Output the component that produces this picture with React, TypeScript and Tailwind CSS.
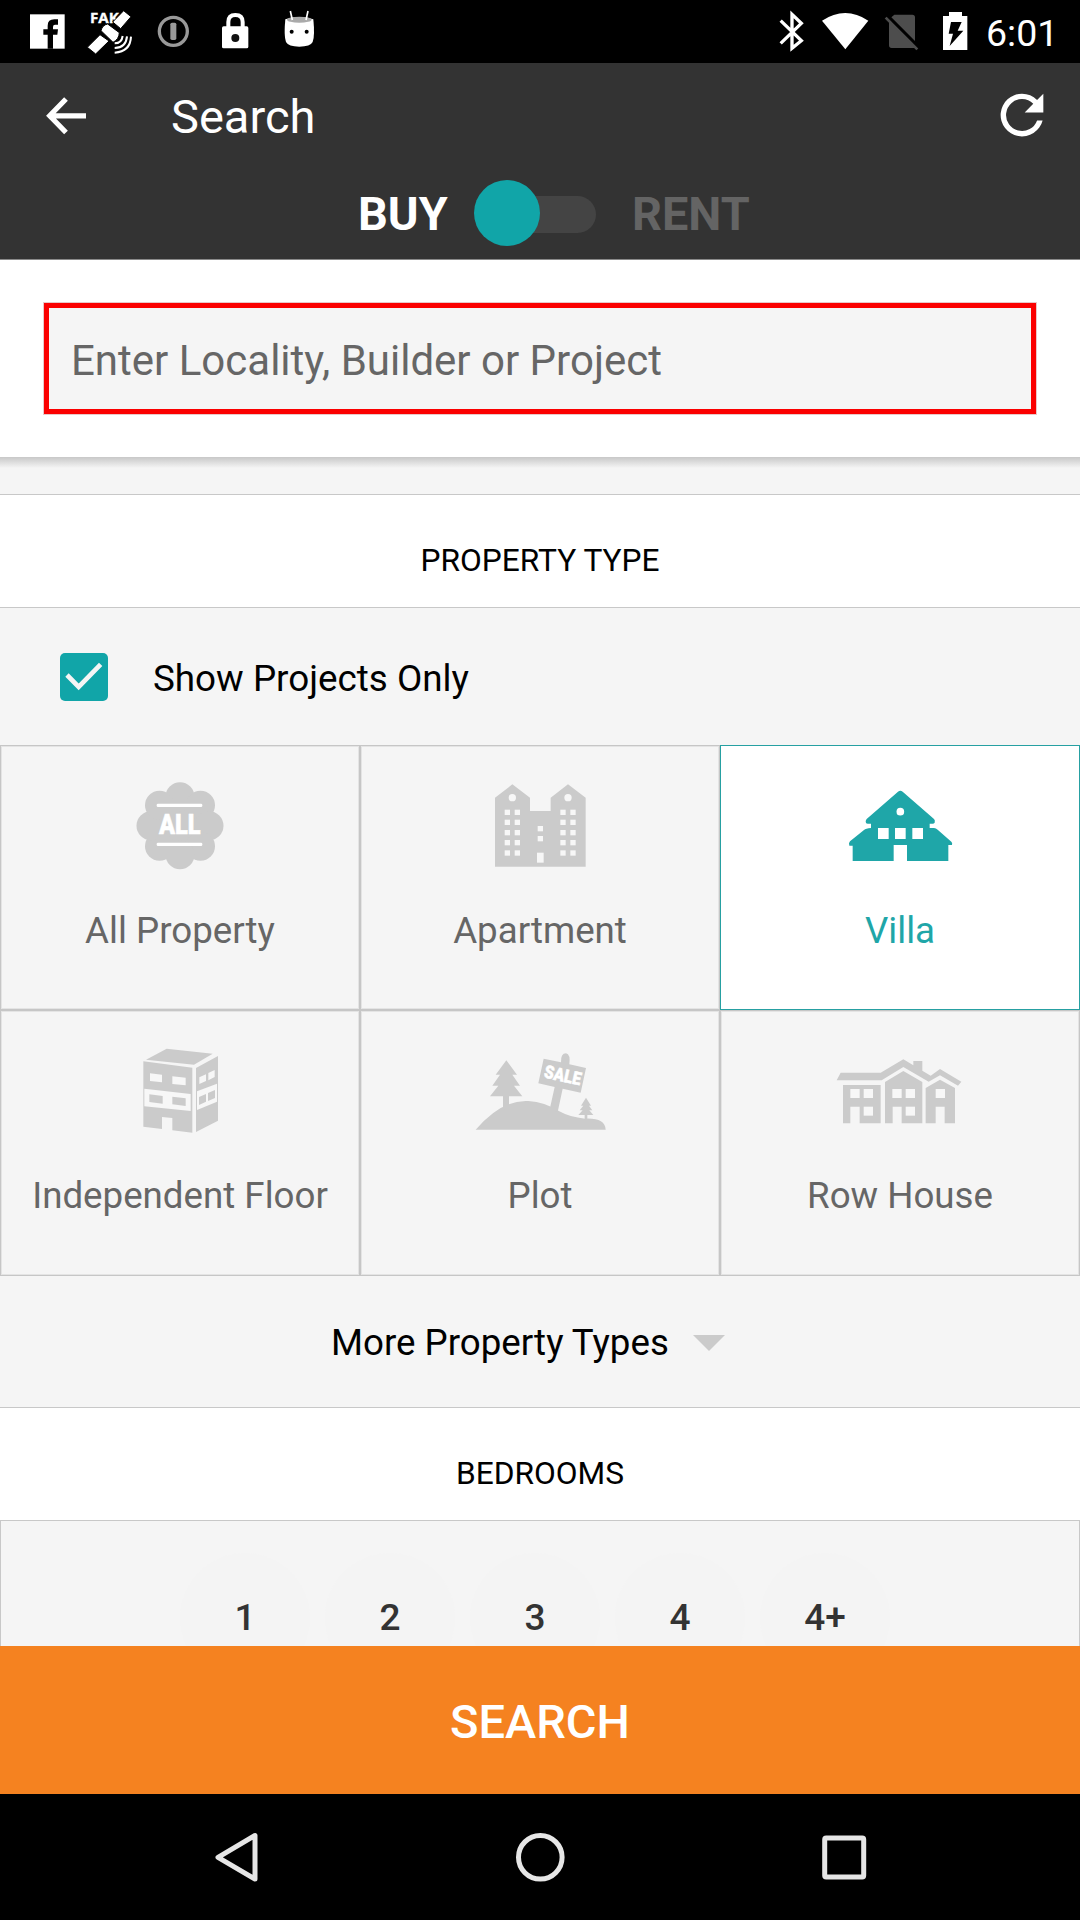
import type { ReactNode } from "react";

const GREY = "#cbcbcb";
const CUT = "#f7f7f7";

function StatusBar() {
  return (
    <div className="flex h-[63px] shrink-0 bg-black">
      <svg className="ml-[20px] h-[63px] w-[320px] shrink-0" viewBox="60 0 960 189">
        <rect x="90" y="43" width="104" height="103" fill="#fff" />
        <path d="M143 146V104H130V88H143V77Q143 58 163 58H174V74H165Q159 74 159 81V88H174L172 104H159V146Z" fill="#000" />
        <text x="270" y="69" fontSize="42" fontWeight="700" fill="#fff" stroke="#fff" strokeWidth="1" textLength="86" lengthAdjust="spacingAndGlyphs" fontFamily="Open Sans, sans-serif">FAK</text>
        <g stroke="#000" strokeWidth="3" fill="#fff">
          <path d="M338 66L371 32L393 50L362 86Z" />
          <path d="M262 142L300 104L327 123L287 162Z" />
          <path d="M303 92Q307 75 323 72L358 98Q357 118 339 127Z" />
        </g>
        <g fill="none" stroke="#fff" strokeWidth="6">
          <path d="M344 130Q365 130 368 108" />
          <path d="M344 144Q378 143 381 109" />
          <path d="M344 158Q391 155 393 110" />
        </g>
        <circle cx="520" cy="94" r="42" fill="none" stroke="#999" strokeWidth="10" />
        <rect x="511" y="68" width="18" height="52" rx="5" fill="#999" />
        <rect x="666" y="79" width="79" height="66" rx="5" fill="#fff" />
        <path d="M685 83V66Q685 45 706 45Q728 45 728 66V83" fill="none" stroke="#fff" strokeWidth="12" />
        <circle cx="706" cy="114" r="12" fill="#111" />
        <path d="M856 58Q898 44 940 58Q945 108 938 126Q931 140 898 140Q865 140 858 126Q851 108 856 58Z" fill="#fff" />
        <ellipse cx="898" cy="59" rx="37" ry="9" fill="#aaa" />
        <path d="M877 60L871 33M918 60L924 33" stroke="#fff" strokeWidth="5" />
        <circle cx="875" cy="95" r="6" fill="#000" />
        <circle cx="920" cy="95" r="6" fill="#000" />
      </svg>
      <svg className="ml-auto h-[63px] w-[208px] shrink-0" viewBox="30 0 624 189">
        <path d="M62 62L124 122L96 145V43L124 70L62 130" fill="none" stroke="#fff" strokeWidth="10" />
        <path d="M186 62Q256 16 325 62L256 148Z" fill="#fff" />
        <path d="M403 44H457Q465 44 465 52V123L394 52ZM387 66L465 144H395Q387 144 387 136Z" fill="#4d4d4d" />
        <path d="M377 53L472 148" stroke="#4d4d4d" strokeWidth="8" />
        <path d="M549 48H567V36H606V48H622V150H549Z" fill="#fff" />
        <path d="M573 66H605L593 92H610L569 138L579 101H566Z" fill="#000" />
      </svg>
      <span className="mr-[27px] ml-[8px] w-[67px] pt-px text-[37.5px] leading-[64px] whitespace-nowrap text-white">6:01</span>
    </div>
  );
}

function Header() {
  return (
    <header className="flex h-[197px] shrink-0 flex-col border-b border-[#8a8a8a] bg-[#333333] text-white">
      <div className="flex h-[106px] items-center">
        <svg className="ml-[44px] h-[44px] w-[44px]" viewBox="44 93.5 44 44">
          <path d="M86 115.3H51M66 98.5L49.700 115.3L66 132" fill="none" stroke="#fff" strokeWidth="5.2" />
        </svg>
        <h1 className="ml-[83px] pt-[2px] text-[47px] leading-[60px]">Search</h1>
        <svg className="mr-[26px] ml-auto h-[64px] w-[64px]" viewBox="0 0 24 24">
          <path
            d="M17.65 6.35A7.958 7.958 0 0 0 12 4a8 8 0 1 0 7.73 10h-2.08A5.99 5.99 0 1 1 12 6c1.66 0 3.14.69 4.22 1.78L13 11h7V4z"
            fill="#fff"
            transform="translate(0 -.35)"
          />
        </svg>
      </div>
      <div className="flex h-[88px] items-center text-[46.8px] font-bold">
        <span className="ml-[358px] w-[116px] pt-[2px] leading-[60px]">BUY</span>
        <div className="relative h-[66px] w-[122px]">
          <div className="absolute top-[16px] right-0 h-[37px] w-[90px] rounded-full bg-[#444444]" />
          <div className="absolute top-0 left-0 size-[66px] rounded-full bg-[#11a5a8]" />
        </div>
        <span className="ml-[36px] pt-[2px] leading-[60px] text-[#646464]">RENT</span>
      </div>
    </header>
  );
}

function AllIcon() {
  const petals = [[0, -29], [20.5, -20.5], [29, 0], [20.5, 20.5], [0, 29], [-20.5, 20.5], [-29, 0], [-20.5, -20.5]];
  return (
    <svg className="h-[100px] w-[150px]" viewBox="15 45 450 300">
      <g fill={GREY}>
        <circle cx="240" cy="197" r="92" />
        {petals.map(([x, y], i) => (
          <circle key={i} cx={240 + x * 3} cy={197 + y * 3} r="43.500" />
        ))}
      </g>
      <g fill="#fff">
        <rect x="170" y="131" width="137" height="10" rx="4" />
        <rect x="170" y="248" width="137" height="10" rx="4" />
        <text x="177" y="222" fontSize="81" fontWeight="900" textLength="125" lengthAdjust="spacingAndGlyphs" stroke="#fff" strokeWidth="1.500">ALL</text>
      </g>
    </svg>
  );
}

function ApartmentIcon() {
  const rows = [149, 179, 210, 240, 271];
  return (
    <svg className="h-[100px] w-[150px]" viewBox="1095 45 450 300">
      <path d="M1185 320V113L1237 73L1290 113V153H1352V113L1404 73L1457 113V320Z" fill={GREY} />
      <g fill={CUT}>
        <circle cx="1237" cy="113" r="11" />
        <circle cx="1404" cy="113" r="11" />
        {rows.map((y) =>
          [1214, 1244, 1381, 1411].map((x) => <rect key={`${x}-${y}`} x={x} y={y} width="16" height="16" />),
        )}
        <rect x="1313" y="198" width="16" height="16" />
        <rect x="1313" y="228" width="16" height="16" />
        <rect x="1311" y="278" width="20" height="30" />
      </g>
    </svg>
  );
}

function VillaIcon() {
  return (
    <svg className="h-[100px] w-[150px]" viewBox="375 105 450 300">
      <path
        d="M594 155Q601 149 608 155L702 237Q706 241 704 248Q702 251 698 251H689V264H702Q708 264 713 269L754 305Q758 309 756 315H745V363H621V315H581V363H458V317H448Q445 309 450 304L492 270Q497 265 513 264V251H503Q497 251 497 245Q497 240 500 237Z"
        fill="#1fa6a8"
      />
      <g fill="#fff">
        <circle cx="601" cy="215" r="11.500" />
        <rect x="534" y="264" width="32" height="33" />
        <rect x="585" y="264" width="32" height="33" />
        <rect x="637" y="264" width="32" height="33" />
      </g>
    </svg>
  );
}

function FloorIcon() {
  return (
    <svg className="h-[100px] w-[150px]" viewBox="15 120 450 300">
      <g fill={GREY}>
        <path d="M138 179L200 146L338 161L282 194Z" />
        <path d="M130 184L277 203V398L217 391V354L186 351V387L130 380Z" />
        <path d="M288 204L354 168V362L288 396Z" />
      </g>
      <g fill={CUT}>
        <path d="M150 220L186 224V247L150 243ZM217 229L257 233V256L217 252Z" />
        <path d="M298 232L318 223V243L298 252ZM325 219L344 210V231L325 241Z" />
        <path d="M133 266L272 282V333L133 319Z" />
        <path d="M291 274L351 251V305L291 330Z" />
      </g>
      <g fill={GREY}>
        <path d="M148 283L188 288V311L148 306ZM217 290L257 295V318L217 313Z" />
        <path d="M297 291L318 282V305L297 315ZM324 279L345 270V294L324 303Z" />
      </g>
    </svg>
  );
}

function PlotIcon() {
  return (
    <svg className="h-[100px] w-[150px]" viewBox="1095 120 450 300">
      <g fill={GREY}>
        <path d="M1127 389Q1205 298 1285 303Q1335 306 1378 334Q1410 352 1455 356Q1515 353 1517 389Z" />
        <path d="M1209 330V289H1170L1195 257H1177L1200 224H1187L1219 181L1251 224H1237L1260 257H1242L1267 289H1227V325Z" />
        <path d="M1454 360V345H1435L1448 331H1439L1450 317H1443L1458 293L1473 317H1467L1477 331H1468L1480 345H1462V360Z" />
        <path d="M1331 176L1383 187Q1382 160 1398 160Q1412 163 1408 193L1458 204L1442 278L1388 266L1373 336L1350 324L1364 261L1315 250Z" />
      </g>
      <text x="0" y="0" transform="translate(1330 232) rotate(12.500)" fontSize="54" fontWeight="900" textLength="112" lengthAdjust="spacingAndGlyphs" fill="#fff" stroke="#fff" strokeWidth="1.500">SALE</text>
    </svg>
  );
}

function RowHouseIcon() {
  return (
    <svg className="h-[100px] w-[150px]" viewBox="135 60 450 300">
      <g fill={GREY}>
        <path d="M170 181L182 158H302L370 118L400 136V123H427V152L452 167L480 147L544 185L534 197L480 166L446 185L370 141L305 181Z" />
        <path d="M189 195H302V310H239V260H211V310H189Z" />
        <path d="M315 186L370 153L427 186V310H365V260H338V310H315Z" />
        <path d="M437 204L480 179L525 204V310H494V260H467V310H437Z" />
      </g>
      <g fill={CUT}>
        <rect x="211" y="207" width="28" height="27" />
        <rect x="251" y="207" width="28" height="27" />
        <rect x="251" y="260" width="28" height="27" />
        <rect x="337" y="207" width="28" height="27" />
        <rect x="377" y="207" width="28" height="27" />
        <rect x="377" y="260" width="28" height="27" />
        <rect x="467" y="207" width="28" height="27" />
      </g>
    </svg>
  );
}

function PropertyCell({ label, icon, selected = false }: { label: string; icon: ReactNode; selected?: boolean }) {
  const tone = selected
    ? "border-[#26a0a2] bg-white text-[#1fa6a8]"
    : "border-[#c6c6c6] text-[#666666] shadow-[inset_0_0_0_1px_#e4e4e4]";
  return (
    <button className={`flex flex-col items-center border pt-[29px] ${tone}`}>
      {icon}
      <span className="mt-[34px] text-[36.7px] leading-[44px] whitespace-nowrap">{label}</span>
    </button>
  );
}

function SectionTitle({ children }: { children: ReactNode }) {
  return (
    <h2 className="flex h-[114px] shrink-0 items-center justify-center border-y border-[#c8c8c8] bg-white text-[31.7px] text-black">
      <span className="pt-[20px] leading-[40px]">{children}</span>
    </h2>
  );
}

export default function App() {
  return (
    <div className="flex h-[1920px] w-[1080px] flex-col overflow-hidden bg-[#f5f5f5] font-['Roboto',sans-serif] antialiased">
      <StatusBar />
      <Header />
      <div className="h-[197px] shrink-0 bg-white px-[43px] pt-[42px]">
        <div className="h-[113px] border border-[#e8c8c8]">
          <div className="flex h-[111px] items-center border-[5px] border-[#fb0000] bg-[#f5f5f5] pl-[22px]">
            <span className="pt-[5px] text-[42px] leading-[50px] whitespace-nowrap text-[#666666]">Enter Locality, Builder or Project</span>
          </div>
        </div>
      </div>
      <div className="h-[37px] shrink-0">
        <div className="h-[11px] bg-linear-to-b from-[#c8c8c8] to-[#f5f5f5]" />
      </div>
      <SectionTitle>PROPERTY TYPE</SectionTitle>
      <div className="flex h-[137px] shrink-0 items-center pl-[60px]">
        <div className="flex size-[48px] items-center justify-center rounded-[5px] bg-[#11a5a8]">
          <svg className="size-[48px]" viewBox="180 188 144 144">
            <path d="M201 254L236 290L302 222" fill="none" stroke="#f5f5f5" strokeWidth="14" />
          </svg>
        </div>
        <span className="ml-[45px] pt-[4px] text-[36.8px] leading-[44px] whitespace-nowrap text-black">Show Projects Only</span>
      </div>
      <div className="grid shrink-0 grid-cols-3 grid-rows-[265px_266px]">
        <PropertyCell label="All Property" icon={<AllIcon />} />
        <PropertyCell label="Apartment" icon={<ApartmentIcon />} />
        <PropertyCell label="Villa" icon={<VillaIcon />} selected />
        <PropertyCell label="Independent Floor" icon={<FloorIcon />} />
        <PropertyCell label="Plot" icon={<PlotIcon />} />
        <PropertyCell label="Row House" icon={<RowHouseIcon />} />
      </div>
      <div className="flex h-[131px] shrink-0 items-center pl-[331px]">
        <span className="w-[339px] pt-[3px] text-[36.7px] leading-[44px] whitespace-nowrap text-black">More Property Types</span>
        <svg className="mt-[3px] ml-[23px] h-[16px] w-[32px]" viewBox="0 0 32 16">
          <path d="M0 0H32L16 16Z" fill={GREY} />
        </svg>
      </div>
      <SectionTitle>BEDROOMS</SectionTitle>
      <div className="flex min-h-0 flex-1 gap-[15px] overflow-hidden border-x border-[#c8c8c8] pt-[32px] pl-[179px]">
        {["1", "2", "3", "4", "4+"].map((n) => (
          <div key={n} className="flex size-[130px] shrink-0 items-center justify-center rounded-full bg-[#f4f4f4] text-[37px] font-medium text-[#333333]">
            {n}
          </div>
        ))}
      </div>
      <button className="flex h-[148px] shrink-0 items-center justify-center bg-[#f58220] text-[47px] font-medium text-white">
        <span className="pt-[4px] leading-[56px]">SEARCH</span>
      </button>
      <nav className="flex h-[126px] shrink-0 items-center bg-black">
        <svg className="ml-[212px] size-[52px]" viewBox="212 1831 52 52">
          <path d="M255 1835.500V1879L218 1857.300Z" fill="none" stroke="#e6e6e6" strokeWidth="5" strokeLinejoin="round" />
        </svg>
        <svg className="ml-[250px] size-[52px]" viewBox="0 0 52 52">
          <circle cx="26.300" cy="26.300" r="21.800" fill="none" stroke="#e6e6e6" strokeWidth="5" />
        </svg>
        <svg className="ml-[252px] size-[52px]" viewBox="0 0 52 52">
          <rect x="6.700" y="7" width="39" height="39" rx="1.500" fill="none" stroke="#e6e6e6" strokeWidth="5" />
        </svg>
      </nav>
    </div>
  );
}
